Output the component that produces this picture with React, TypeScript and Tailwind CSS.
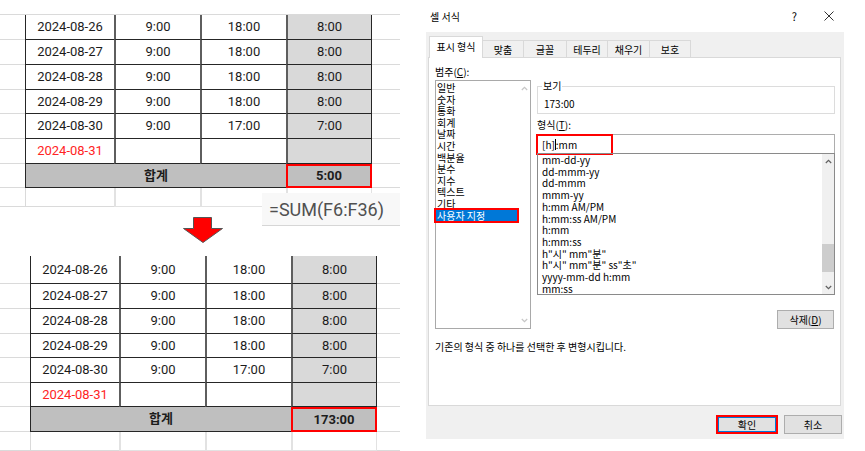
import React from 'react';

const TF = "font-['Roboto','Noto_Sans_CJK_KR',sans-serif]";
const DF = "font-['Noto_Sans_CJK_KR','Noto_Sans',sans-serif]";

type Row = [string, string, string, string];

const rows: Row[] = [
  ['2024-08-26', '9:00', '18:00', '8:00'],
  ['2024-08-27', '9:00', '18:00', '8:00'],
  ['2024-08-28', '9:00', '18:00', '8:00'],
  ['2024-08-29', '9:00', '18:00', '8:00'],
  ['2024-08-30', '9:00', '17:00', '7:00'],
  ['2024-08-31', '', '', ''],
];

const categories = ['일반', '숫자', '통화', '회계', '날짜', '시간', '백분율', '분수', '지수', '텍스트', '기타', '사용자 지정'];

const formats = [
  'mm-dd-yy',
  'dd-mmm-yy',
  'dd-mmm',
  'mmm-yy',
  'h:mm AM/PM',
  'h:mm:ss AM/PM',
  'h:mm',
  'h:mm:ss',
  'h"시" mm"분"',
  'h"시" mm"분" ss"초"',
  'yyyy-mm-dd h:mm',
  'mm:ss',
];

function Sheet({ indent, heights, total }: { indent: string; heights: string[]; total: string }) {
  return (
    <div className={`${TF} text-[13px] text-[#1c1c1c]`}>
      {rows.map((r, i) => (
        <div key={i} className={`flex ${heights[i]}`}>
          <div className={`${indent} border-b border-[#dadada]`} />
          <div
            className={`w-[89px] flex items-center justify-center border-l border-b border-[#262626] ${
              i === 5 ? 'text-[#ff2424]' : ''
            }`}
          >
            {r[0]}
          </div>
          <div className="w-[86px] flex items-center justify-center border-l-2 border-l-[#5e5e5e] border-b border-b-[#262626]">
            {r[1]}
          </div>
          <div className="w-[86px] flex items-center justify-center border-l-2 border-l-[#5e5e5e] border-b border-b-[#262626]">
            {r[2]}
          </div>
          <div className="w-[86px] flex items-center justify-center bg-[#d9d9d9] border-l-2 border-l-[#5e5e5e] border-r border-r-[#262626] border-b border-b-[#262626]">
            {r[3]}
          </div>
          <div className="flex-1 border-b border-[#dadada]" />
        </div>
      ))}
      <div className={`flex ${heights[6]}`}>
        <div className={`${indent} border-b border-[#dadada]`} />
        <div className="w-[261px] flex items-center justify-center bg-[#bfbfbf] border-l border-b border-[#262626] font-bold">
          합계
        </div>
        <div className="w-[86px] flex items-center justify-center bg-[#bfbfbf] border-2 border-[#ff0000] font-bold">
          {total}
        </div>
        <div className="flex-1 border-b border-[#dadada]" />
      </div>
      <div className="flex h-[19px]">
        <div className={`${indent} border-b border-[#dadada]`} />
        <div className="w-[89px] border-l border-b border-[#dadada]" />
        <div className="w-[86px] border-l-2 border-b border-[#e2e2e2]" />
        <div className="w-[86px] border-l-2 border-b border-[#e2e2e2]" />
        <div className="w-[86px] border-l-2 border-r border-b border-[#e2e2e2]" />
        <div className="flex-1 border-b border-[#dadada]" />
      </div>
    </div>
  );
}

function Chevron({ up, color }: { up?: boolean; color: string }) {
  return (
    <svg width="7" height="5" viewBox="0 0 7 5">
      <polyline
        points={up ? '0.8,4 3.5,1.3 6.2,4' : '0.8,1 3.5,3.7 6.2,1'}
        fill="none"
        stroke={color}
        strokeWidth="1.2"
      />
    </svg>
  );
}

export default function App() {
  return (
    <div className="w-[865px] h-[451px] bg-white flex overflow-hidden">
      {/* spreadsheet side */}
      <div className="w-[400px] relative">
        <div className="h-[15px] border-b border-[#dadada]" />
        <Sheet
          indent="w-[25px]"
          heights={['h-[25px]', 'h-[25px]', 'h-[25px]', 'h-[24px]', 'h-[25px]', 'h-[25px]', 'h-[24px]']}
          total="5:00"
        />
        <div className="h-[49px]" />
        <Sheet
          indent="w-[30px]"
          heights={['h-[28px]', 'h-[25px]', 'h-[25px]', 'h-[24px]', 'h-[25px]', 'h-[24px]', 'h-[25px]']}
          total="173:00"
        />

        <div className="absolute left-[262px] top-[193px] w-[138px] h-[33px] bg-[#f8f8f8] border-b border-[#d6d6d6] flex items-center pl-[7px] font-['Roboto',sans-serif] text-[18px] text-[#505050]">
          =SUM(F6:F36)
        </div>
        <svg className="absolute left-[183px] top-[217px]" width="40" height="26" viewBox="0 0 40 26">
          <polygon points="10.5,0.5 28.5,0.5 28.5,11.5 39.5,11.5 20,25.5 0.5,11.5 10.5,11.5" fill="#ff0000" stroke="#555" strokeWidth="1" />
        </svg>
      </div>

      {/* dialog */}
      <div className={`w-[465px] flex flex-col ${DF} text-[10px] text-black`}>
        <div className="h-[32px] flex items-center justify-between pl-[30px] pr-[31px]">
          <span>셀 서식</span>
          <div className="flex items-center gap-[27px]">
            <span className="text-[11px]">?</span>
            <svg width="10" height="10" viewBox="0 0 10 10">
              <path d="M0.5 0.5 L9.5 9.5 M9.5 0.5 L0.5 9.5" stroke="#333" strokeWidth="1" />
            </svg>
          </div>
        </div>

        <div className="ml-[26px] w-[418px] h-[407px] bg-[#f0f0f0] flex flex-col">
          <div className="h-[26px] -mb-px flex items-end pl-[3px] relative z-10">
            <div className="w-[54px] h-[22px] bg-white border-l border-t border-r border-[#d9d9d9] flex items-center justify-center pb-[2px]">
              표시 형식
            </div>
            {[
              ['맞춤', 'w-[41px]'],
              ['글꼴', 'w-[43px]'],
              ['테두리', 'w-[41px]'],
              ['채우기', 'w-[42px]'],
              ['보호', 'w-[41px]'],
            ].map(([t, w]) => (
              <div
                key={t}
                className={`${w} h-[17px] mb-px border-t border-r border-[#d9d9d9] flex items-center justify-center`}
              >
                {t}
              </div>
            ))}
          </div>

          <div className="ml-[2px] w-[413px] h-[349px] bg-white border border-[#d9d9d9]">
            <div className="flex pl-[6px]">
              <div className="w-[96px] flex flex-col">
                <div className="h-[22px] flex items-end pb-[2px] leading-[12px]">
                  <span>
                    범주(<u>C</u>):
                  </span>
                </div>
                <div className="h-[249px] border border-[#a9a9a9] relative">
                  <div className="pt-px leading-[11.6px]">
                    {categories.map((c) =>
                      c === '사용자 지정' ? (
                        <div
                          key={c}
                          className="w-[81px] bg-[#0078d7] text-white pl-px outline-2 outline-[#ff0000]"
                        >
                          {c}
                        </div>
                      ) : (
                        <div key={c} className="pl-px">
                          {c}
                        </div>
                      ),
                    )}
                  </div>
                  <div className="absolute right-[2px] top-[5px] bottom-[5px] flex flex-col justify-between">
                    <Chevron up color="#c6c6c6" />
                    <Chevron color="#c6c6c6" />
                  </div>
                </div>
              </div>

              <div className="ml-[6px] w-[298px] flex flex-col">
                <div className="h-[28px]" />
                <div className="h-[28px] border border-[#dcdcdc] relative">
                  <span className="absolute -top-[7px] left-[4px] bg-white px-px leading-[12px]">보기</span>
                  <div className="pt-[11px] pl-[6px] leading-[12px]">173:00</div>
                </div>
                <div className="h-[20px] flex items-end pb-[3px] leading-[12px]">
                  <span>
                    형식(<u>T</u>):
                  </span>
                </div>
                <div className="h-[20px] border border-[#adadad] relative flex items-center pl-[4px]">
                  <span>[h]</span>
                  <span className="w-px h-[11px] bg-black" />
                  <span>:mm</span>
                  <div className="absolute -left-[2px] -top-[1px] w-[77px] h-[21px] border-2 border-[#ff0000]" />
                </div>
                <div className="h-[142px] -mt-px border border-[#8a8a8a] relative">
                  <div className="pl-[4px] leading-[11.7px]">
                    {formats.map((f) => (
                      <div key={f}>{f}</div>
                    ))}
                  </div>
                  <div className="absolute right-0 top-0 bottom-0 w-[12px] bg-[#f0f0f0] flex flex-col items-center">
                    <div className="pt-[5px] h-[90px]">
                      <Chevron up color="#606060" />
                    </div>
                    <div className="w-full h-[28px] bg-[#cdcdcd]" />
                    <div className="mt-auto pb-[4px]">
                      <Chevron color="#606060" />
                    </div>
                  </div>
                </div>
                <div className="mt-[15px] self-end mr-px w-[57px] h-[19px] bg-[#e1e1e1] border border-[#adadad] flex items-center justify-center">
                  <span>
                    삭제(<u>D</u>)
                  </span>
                </div>
              </div>
            </div>
            <div className="pl-[6px] mt-[12px] leading-[12px]">기존의 형식 중 하나를 선택한 후 변형시킵니다.</div>
          </div>

          <div className="flex justify-end gap-[6px] pr-[2px] pt-[9px]">
            <div className="w-[62px] h-[19px] border-2 border-[#ff0000]">
              <div className="w-full h-full bg-[#e1e1e1] border border-[#0078d7] flex items-center justify-center">
                확인
              </div>
            </div>
            <div className="w-[58px] h-[19px] bg-[#e1e1e1] border border-[#adadad] flex items-center justify-center">
              취소
            </div>
          </div>
        </div>
      </div>
    </div>
  );
}
